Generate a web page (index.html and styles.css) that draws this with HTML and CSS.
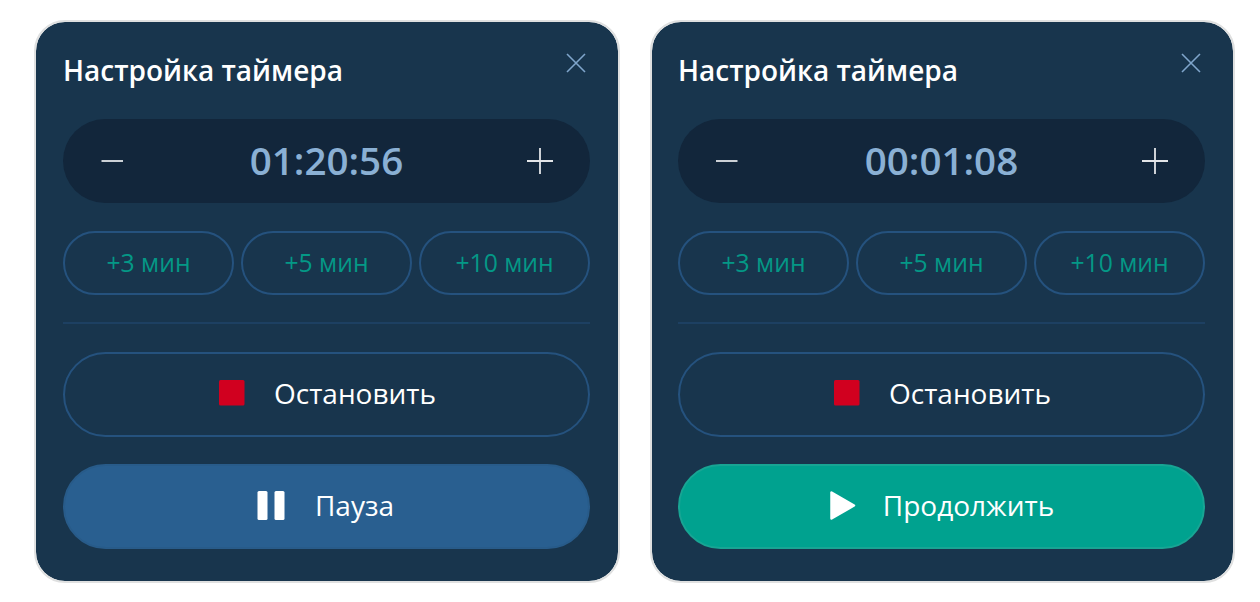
FILE: index.html
```
<!DOCTYPE html>
<html lang="ru">
<head>
    <meta charset="UTF-8">
    <meta name="viewport" content="width=device-width, initial-scale=1.0">
    <title>Настройка таймера</title>
    <link rel="stylesheet" href="styles.css">
</head>
<body>
    <div class="card running">
        <div class="header">
            <h2>Настройка таймера</h2>
            <button class="close" aria-label="Закрыть">
                <svg width="20" height="20" viewBox="0 0 20 20"><path d="M1 1L19 19M19 1L1 19"/></svg>
            </button>
        </div>
        <div class="time">
            <button class="step" aria-label="Меньше">
                <svg width="28" height="28" viewBox="0 0 28 28"><path d="M3.5 14H25"/></svg>
            </button>
            <span>01:20:56</span>
            <button class="step" aria-label="Больше">
                <svg width="28" height="28" viewBox="0 0 28 28"><path d="M1 14H27M14 1V27"/></svg>
            </button>
        </div>
        <div class="presets">
            <button>+3 мин</button>
            <button>+5 мин</button>
            <button>+10 мин</button>
        </div>
        <hr>
        <button class="action stop">
            <svg width="26" height="26" viewBox="0 0 26 26"><rect width="25.5" height="25.5" rx="1.5"/></svg>
            <span>Остановить</span>
        </button>
        <button class="action pause">
            <svg width="28" height="30" viewBox="0 0 28 30"><rect x="0.5" y="1" width="10" height="29" rx="1.5"/><rect x="17.5" y="1" width="10" height="29" rx="1.5"/></svg>
            <span>Пауза</span>
        </button>
    </div>

    <div class="card paused">
        <div class="header">
            <h2>Настройка таймера</h2>
            <button class="close" aria-label="Закрыть">
                <svg width="20" height="20" viewBox="0 0 20 20"><path d="M1 1L19 19M19 1L1 19"/></svg>
            </button>
        </div>
        <div class="time">
            <button class="step" aria-label="Меньше">
                <svg width="28" height="28" viewBox="0 0 28 28"><path d="M3 14H24.5"/></svg>
            </button>
            <span>00:01:08</span>
            <button class="step" aria-label="Больше">
                <svg width="28" height="28" viewBox="0 0 28 28"><path d="M1 14H27M14 1V27"/></svg>
            </button>
        </div>
        <div class="presets">
            <button>+3 мин</button>
            <button>+5 мин</button>
            <button>+10 мин</button>
        </div>
        <hr>
        <button class="action stop">
            <svg width="26" height="26" viewBox="0 0 26 26"><rect width="25.5" height="25.5" rx="1.5"/></svg>
            <span>Остановить</span>
        </button>
        <button class="action resume">
            <svg width="26" height="30" viewBox="0 0 26 30"><path d="M1.5 2.5V28.5L24 15.5Z" stroke="#fff" stroke-width="2.5" stroke-linejoin="round"/></svg>
            <span>Продолжить</span>
        </button>
    </div>
</body>
</html>
```
FILE: styles.css
```
* {
    box-sizing: border-box;
}
body {
    font-family: "Open Sans", "Noto Sans", sans-serif;
    margin: 0;
    padding: 20px 0 0 34px;
    display: flex;
    align-items: flex-start;
    gap: 30px;
    background: #fff;
    color: #fff;
}
.card {
    height: 563px;
    border: 2px solid #dfe0e0;
    border-radius: 31px;
    background: #18354d;
    background-clip: padding-box;
}
.running {
    width: 586px;
    padding: 0 28px 0 27px;
}
.paused {
    width: 585px;
    padding: 0 28px 0 26px;
}
button {
    font-family: inherit;
    color: inherit;
    padding: 0;
    border: none;
    background: none;
    cursor: pointer;
}
svg {
    display: block;
    flex: none;
}
.header {
    display: flex;
    justify-content: space-between;
    height: 97px;
    padding: 29px 4px 0 0;
}
h2 {
    margin: 0;
    font-size: 28px;
    line-height: 38px;
    font-weight: 600;
    white-space: nowrap;
}
.close {
    height: 20px;
    margin-top: 2px;
}
.close path {
    stroke: #7fa5cb;
    stroke-width: 1.6;
}
.time {
    display: flex;
    align-items: center;
    justify-content: space-between;
    height: 84px;
    padding: 0 36px 0 35px;
    border-radius: 42px;
    background: #12263b;
    color: #8ab0d4;
    font-size: 38.6px;
    font-weight: 600;
}
.time span {
    padding: 0 0 2px 1px;
}
.step path {
    stroke: #e3e5e8;
    stroke-width: 1.8;
}
.presets {
    display: flex;
    gap: 7px;
    margin-top: 28px;
}
.presets button {
    flex: 1;
    height: 64px;
    padding-bottom: 2px;
    border: 2px solid #25527e;
    border-radius: 32px;
    color: #049886;
    font-size: 24.7px;
}
hr {
    height: 2px;
    margin: 27px 0 28px;
    border: none;
    background: #1d4062;
}
.action {
    display: flex;
    align-items: center;
    justify-content: center;
    gap: 30px;
    width: 100%;
    height: 85px;
    padding-bottom: 3px;
    border: 2px solid #25527e;
    border-radius: 43px;
    font-size: 28px;
}
.action svg {
    fill: #fff;
}
.stop {
    gap: 29px;
    padding-left: 2px;
}
.stop svg {
    fill: #d1001f;
}
.pause,
.resume {
    margin-top: 27px;
}
.pause {
    padding-right: 2px;
    border-color: #285b89;
    background: #295f90;
}
.resume {
    gap: 27px;
    padding-left: 1px;
    border-color: #18a594;
    background: #00a28f;
}
```
